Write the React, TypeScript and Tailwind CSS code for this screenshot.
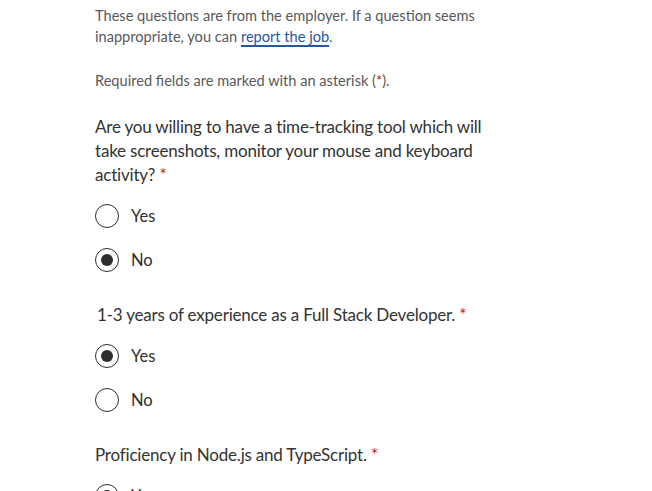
import React from 'react';

type Option = { label: string; checked: boolean };

interface QuestionProps {
  text: string;
  options: Option[];
  indent?: boolean;
}

function Radio({ label, checked }: Option) {
  return (
    <label className="flex items-center h-[44px] gap-3">
      <span className="w-6 h-6 rounded-full border border-[#2d2d2d] flex items-center justify-center bg-white">
        {checked && <span className="w-3 h-3 rounded-full bg-[#2d2d2d]" />}
      </span>
      <span className="text-[16.5px] text-[#2d2d2d]">{label}</span>
    </label>
  );
}

function Question({ text, options, indent }: QuestionProps) {
  return (
    <fieldset className="mb-[21px]">
      <legend
        className={`text-[17px] tracking-[-0.2px] leading-6 text-[#333333] max-w-[400px] ${indent ? 'pl-[2px]' : ''}`}
      >
        {text}
        {'\u00a0'}
        <span className="text-[#a9252b]">*</span>
      </legend>
      <div className="mt-[7px]">
        {options.map((o) => (
          <Radio key={o.label} {...o} />
        ))}
      </div>
    </fieldset>
  );
}

export default function App() {
  return (
    <div className="h-[491px] overflow-hidden bg-white px-[95px] pt-[5px] font-['Lato',sans-serif]">
      <p className="text-[14.6px] leading-[21px] text-[#595959] max-w-[400px]">
        These questions are from the employer. If a question seems inappropriate, you can{' '}
        <a href="#" className="text-[#2557a7] underline underline-offset-[3px] decoration-[1.5px]">
          report the job
        </a>
        .
      </p>
      <p className="mt-[24px] text-[14.6px] leading-5 text-[#595959]">
        Required fields are marked with an asterisk (<span className="text-[#a9252b]">*</span>).
      </p>

      <div className="mt-[24px]">
        <Question
          text="Are you willing to have a time-tracking tool which will take screenshots, monitor your mouse and keyboard activity?"
          options={[
            { label: 'Yes', checked: false },
            { label: 'No', checked: true }
          ]}
        />
        <Question
          indent
          text="1-3 years of experience as a Full Stack Developer."
          options={[
            { label: 'Yes', checked: true },
            { label: 'No', checked: false }
          ]}
        />
        <Question
          text="Proficiency in Node.js and TypeScript."
          options={[
            { label: 'Yes', checked: true },
            { label: 'No', checked: false }
          ]}
        />
      </div>
    </div>
  );
}
